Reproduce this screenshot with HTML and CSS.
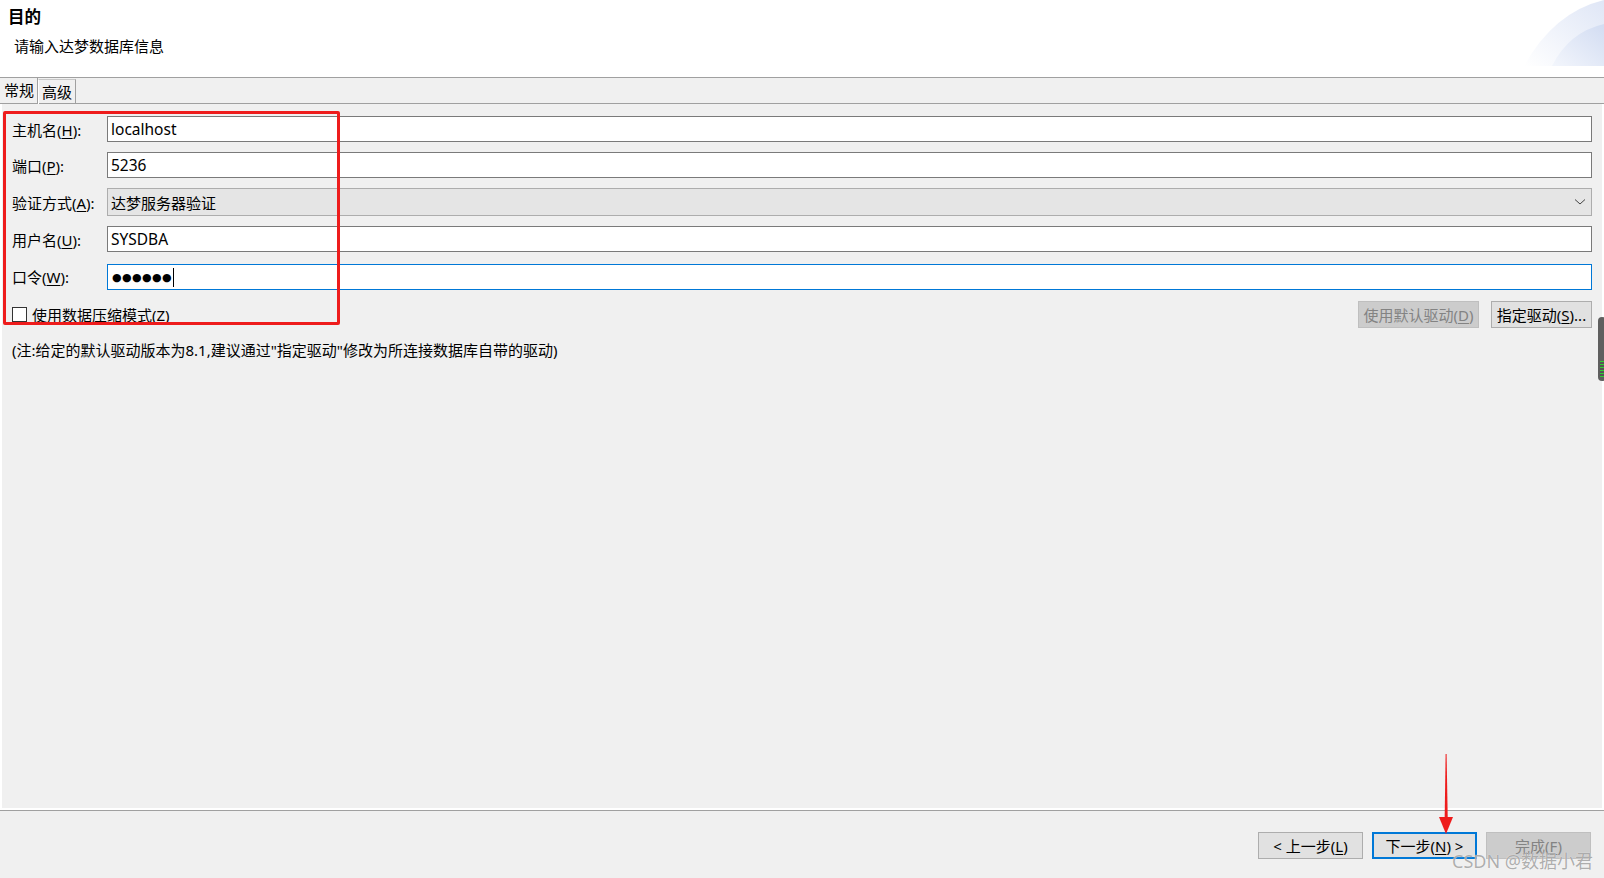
FILE: index.html
```html
<!DOCTYPE html>
<html lang="zh-CN">

<head>
    <meta charset="UTF-8">
    <meta name="viewport" content="width=device-width, initial-scale=1.0">
    <title>新建连接</title>
    <link rel="stylesheet" href="styles.css">
</head>

<body>
    <div class="header">
        <h1 class="title">目的</h1>
        <p class="desc">请输入达梦数据库信息</p>
        <!--右上角的淡蓝色装饰-->
        <svg class="deco" width="90" height="68" viewBox="0 0 90 68">
            <defs>
                <linearGradient id="g1" x1="0" y1="1" x2="1" y2="0">
                    <stop offset="0" stop-color="#ffffff" />
                    <stop offset="1" stop-color="#dfe6f6" />
                </linearGradient>
                <linearGradient id="g2" x1="0" y1="1" x2="1" y2="0">
                    <stop offset="0" stop-color="#f3f6fc" />
                    <stop offset="1" stop-color="#d2dcf2" />
                </linearGradient>
            </defs>
            <path d="M10 66 Q40 12 90 0 L90 66 Z" fill="url(#g1)" />
            <path d="M38 66 Q55 32 90 24 L90 66 Z" fill="url(#g2)" />
        </svg>
    </div>

    <div class="tabs">
        <span class="tab active">常规</span>
        <span class="tab">高级</span>
    </div>

    <div class="main">
        <div class="panel">
            <div class="form">
                <label>主机名(<u>H</u>):</label>
                <div class="field">localhost</div>

                <label>端口(<u>P</u>):</label>
                <div class="field">5236</div>

                <label>验证方式(<u>A</u>):</label>
                <div class="field combo">
                    <span>达梦服务器验证</span>
                    <svg width="12" height="8" viewBox="0 0 12 8">
                        <polyline points="1,1.5 6,6 11,1.5" fill="none" stroke="#444" stroke-width="1" />
                    </svg>
                </div>

                <label>用户名(<u>U</u>):</label>
                <div class="field">SYSDBA</div>

                <label>口令(<u>W</u>):</label>
                <div class="field focus"><span class="dots">●●●●●●</span><span class="caret"></span></div>
            </div>

            <div class="options">
                <label class="check"><span class="box"></span>使用数据压缩模式(<u>Z</u>)</label>
                <div class="btns">
                    <button class="btn disabled w121">使用默认驱动(<u>D</u>)</button>
                    <button class="btn w101">指定驱动(<u>S</u>)...</button>
                </div>
            </div>

            <p class="note">(注:给定的默认驱动版本为8.1,建议通过"指定驱动"修改为所连接数据库自带的驱动)</p>
        </div>
    </div>

    <div class="footer">
        <button class="btn big">&lt; 上一步(<u>L</u>)</button>
        <button class="btn big default">下一步(<u>N</u>) &gt;</button>
        <button class="btn big disabled">完成(<u>F</u>)</button>
    </div>

    <!--截图上的标注-->
    <div class="mark"></div>
    <svg class="arrow" width="20" height="82" viewBox="0 0 20 82">
        <polygon points="9.6,0 10.6,0 11.8,68 8.6,68" fill="#ee1c1c" />
        <polygon points="3,63 17,63 10,80" fill="#ee1c1c" />
    </svg>
    <span class="scroll-bit"></span>
    <span class="watermark">CSDN @数据小君</span>
</body>

</html>
```

FILE: styles.css
```css
/*
    基本样式
*/
* {
    box-sizing: border-box;
}

body,
h1,
p {
    margin: 0px;
    padding: 0px;
}

body {
    position: relative;
    display: flex;
    flex-direction: column;
    width: 1604px;
    height: 878px;
    overflow: hidden;
    background-color: #f0f0f0;
    font-family: "Noto Sans", "Noto Sans CJK SC", sans-serif;
    font-size: 15px;
    color: #000;
}

u {
    text-underline-offset: 2px;
}

/*
    顶部
*/
.header {
    position: relative;
    height: 78px;
    flex: none;
    padding: 6px 8px 0;
    background-color: #fff;
    border-bottom: 1px solid #a0a0a0;
}

.title {
    font-size: 16.5px;
    font-weight: bold;
    line-height: 22px;
}

.desc {
    margin: 8px 0 0 6px;
    line-height: 20px;
}

.header .deco {
    position: absolute;
    right: 0px;
    top: 0px;
}

/*
    选项卡
*/
.tabs {
    display: flex;
    height: 26px;
    flex: none;
    border-bottom: 1px solid #a0a0a0;
}

.tab {
    height: 25px;
    line-height: 24px;
    padding: 0 3px 0 4px;
    border-right: 1px solid #a0a0a0;
}

.tab + .tab {
    margin-top: 1px;
    padding: 0 3px 0 3px;
    border-top: 1px solid #c8c8c8;
    border-left: 1px solid #fff;
}

.tab.active {
    height: 26px;
}

/*
    主体
*/
.main {
    flex: 1;
    padding: 0 2px 2px;
    background-color: #fff;
}

.panel {
    height: 100%;
    padding: 12px 10px 0 10px;
    background-color: #f0f0f0;
}

.form {
    display: grid;
    grid-template-columns: 95px 1fr;
    row-gap: 10px;
    align-items: center;
}

.field {
    display: flex;
    align-items: center;
    height: 26px;
    padding-left: 3px;
    background-color: #fff;
    border: 1px solid #7a7a7a;
    font-size: 15.5px;
}

.field.combo {
    justify-content: space-between;
    height: 28px;
    padding-right: 5px;
    background-color: #e5e5e5;
    border-color: #adadad;
    font-size: 15px;
}

.field.focus {
    margin-top: 2px;
    border-color: #0078d7;
}

.dots {
    font-family: "DejaVu Sans", sans-serif;
    font-size: 11px;
    letter-spacing: 0.4px;
    padding-left: 1px;
}

.caret {
    display: inline-block;
    width: 1px;
    height: 19px;
    margin-left: 1px;
    background-color: #000;
}

.options {
    display: flex;
    justify-content: space-between;
    align-items: center;
    margin-top: 11px;
}

.check {
    display: flex;
    align-items: center;
}

.check .box {
    width: 15px;
    height: 15px;
    margin-right: 5px;
    background-color: #fff;
    border: 1px solid #333;
}

.btns {
    display: flex;
    gap: 12px;
}

.btn {
    height: 27px;
    padding: 0;
    background-color: #e1e1e1;
    border: 1px solid #adadad;
    font-family: inherit;
    font-size: 15px;
    color: #000;
}

.btn.disabled {
    background-color: #cccccc;
    border-color: #bfbfbf;
    color: #838383;
}

.w121 {
    width: 121px;
}

.w101 {
    width: 101px;
}

.note {
    margin-top: 12px;
    line-height: 20px;
}

/*
    底部按钮
*/
.footer {
    display: flex;
    justify-content: flex-end;
    gap: 9px;
    height: 68px;
    flex: none;
    padding: 21px 13px 0 0;
    border-top: 1px solid #a0a0a0;
}

.btn.big {
    width: 105px;
    height: 27px;
}

.btn.default {
    border: 2px solid #0078d7;
}

/*
    截图标注
*/
.mark {
    position: absolute;
    left: 3px;
    top: 111px;
    width: 337px;
    height: 214px;
    border: 3px solid #ee1c1c;
    border-radius: 2px;
}

.arrow {
    position: absolute;
    left: 1436px;
    top: 754px;
}

.scroll-bit {
    position: absolute;
    left: 1598px;
    top: 317px;
    width: 8px;
    height: 64px;
    border-radius: 4px;
    background: repeating-linear-gradient(to bottom, #3c3 0 1px, #555 1px 3px) 2px 44px / 6px 16px no-repeat, #5f5f5f;
}

.watermark {
    position: absolute;
    left: 1452px;
    top: 847px;
    font-size: 18px;
    color: rgba(120, 120, 120, 0.6);
    text-shadow: 0 0 1px #fff;
}
```
